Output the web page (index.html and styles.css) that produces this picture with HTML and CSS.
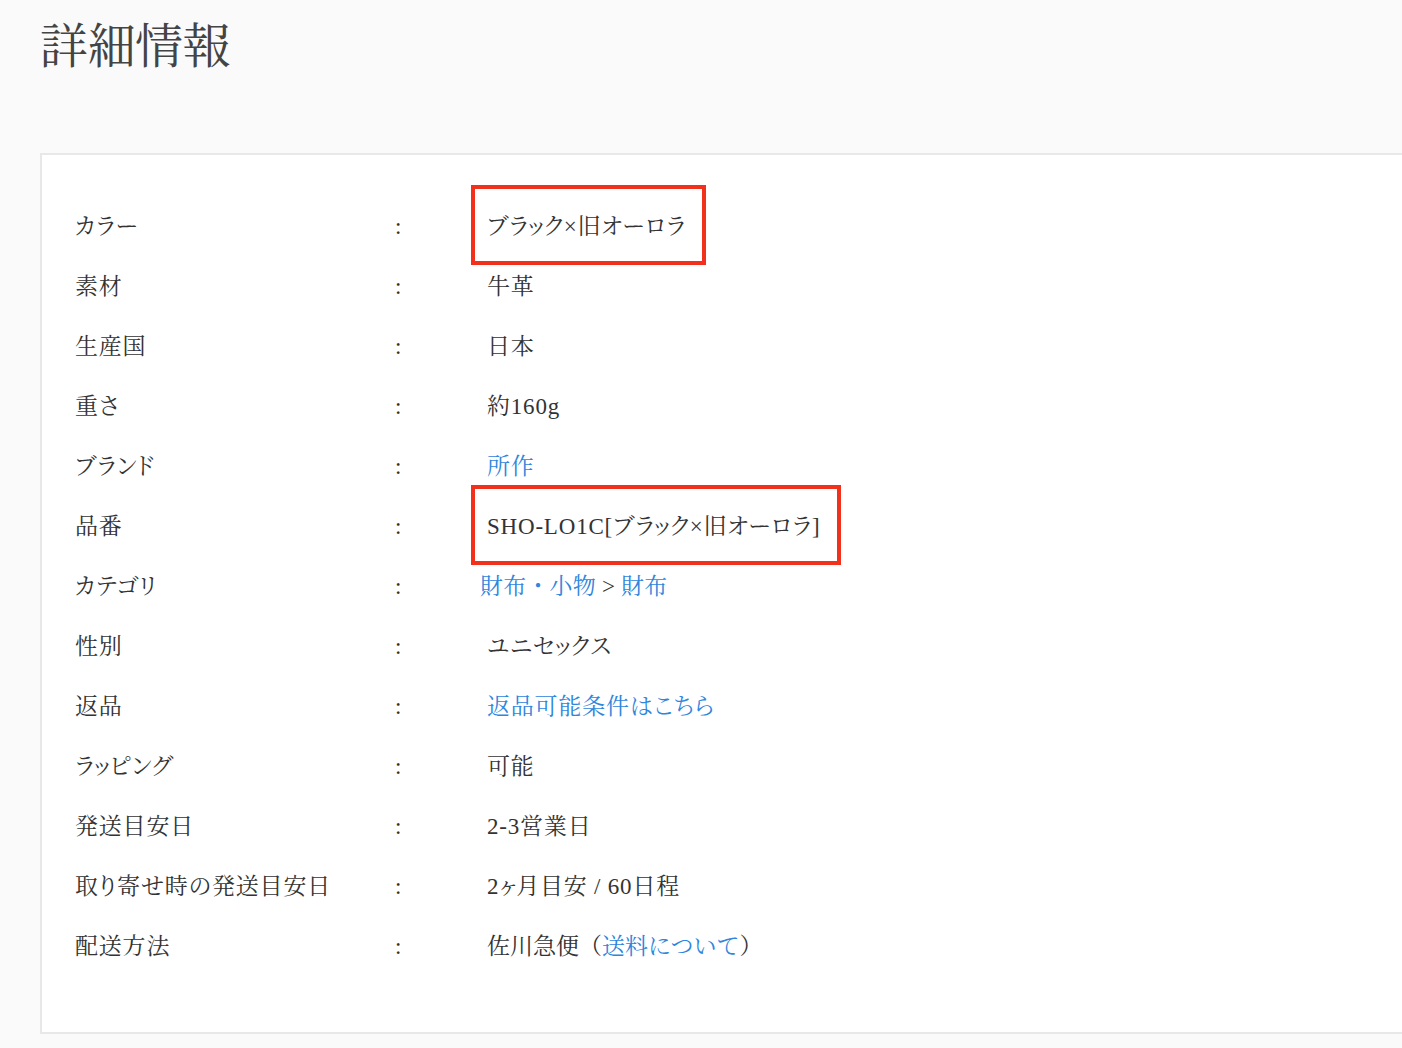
FILE: index.html
```html
<!DOCTYPE html>
<html lang="ja">
<head>
<meta charset="utf-8">
<title>詳細情報</title>
<link rel="stylesheet" href="styles.css">
</head>
<body>
<div class="page">
  <h1 class="title">詳細情報</h1>
  <div class="card">
    <div class="specs">
      <div class="label">カラー</div><div class="colon">:</div><div class="value"><span class="hl">ブラック×旧オーロラ</span></div>
      <div class="label">素材</div><div class="colon">:</div><div class="value">牛革</div>
      <div class="label">生産国</div><div class="colon">:</div><div class="value">日本</div>
      <div class="label">重さ</div><div class="colon">:</div><div class="value">約160g</div>
      <div class="label">ブランド</div><div class="colon">:</div><div class="value"><a class="link" href="#">所作</a></div>
      <div class="label">品番</div><div class="colon">:</div><div class="value"><span class="hl">SHO-LO1C[ブラック×旧オーロラ]</span></div>
      <div class="label">カテゴリ</div><div class="colon">:</div><div class="value value-cat"><a class="link" href="#">財布・小物</a> &gt; <a class="link" href="#">財布</a></div>
      <div class="label">性別</div><div class="colon">:</div><div class="value">ユニセックス</div>
      <div class="label">返品</div><div class="colon">:</div><div class="value"><a class="link" href="#">返品可能条件はこちら</a></div>
      <div class="label">ラッピング</div><div class="colon">:</div><div class="value">可能</div>
      <div class="label">発送目安日</div><div class="colon">:</div><div class="value">2-3営業日</div>
      <div class="label">取り寄せ時の発送目安日</div><div class="colon">:</div><div class="value">2ヶ月目安 / 60日程</div>
      <div class="label">配送方法</div><div class="colon">:</div><div class="value value-full">佐川急便（<a class="link" href="#">送料について</a>）</div>
    </div>
  </div>
</div>
</body>
</html>
```

FILE: styles.css
```css
html, body {
  margin: 0;
  padding: 0;
  overflow: hidden;
  background: #fafafa;
}
body {
  font-family: "Liberation Serif", "Noto Serif CJK JP", "Noto Sans CJK JP", serif;
  color: #333;
}
.page {
  padding: 13px 0 0 40px;
}
.title {
  margin: 0 0 72px 0;
  font-size: 48px;
  line-height: 68px;
  font-weight: normal;
  color: #444;
  letter-spacing: -0.5px;
}
.card {
  width: 1400px;
  background: #fff;
  border: 2px solid #e8e8e8;
  box-sizing: border-box;
  padding: 42px 0 55px 33px;
}
.specs {
  display: grid;
  grid-template-columns: 316px 80px 1fr;
  grid-auto-rows: 60px;
  font-size: 23px;
  line-height: 60px;
  font-feature-settings: "palt";
  letter-spacing: 0.8px;
}
.colon {
  padding-left: 4px;
  letter-spacing: 0;
}
.value {
  padding-left: 16px;
  white-space: nowrap;
}
.value-cat {
  padding-left: 9px;
  font-feature-settings: normal;
  letter-spacing: 0.2px;
}
.value-full {
  font-feature-settings: normal;
  letter-spacing: 0;
}
.link {
  color: #2f86dd;
  text-decoration: none;
}
.hl {
  position: relative;
  display: inline-block;
  line-height: 60px;
}
.hl::after {
  content: "";
  position: absolute;
  top: -12px;
  bottom: -8px;
  left: -16px;
  right: -20px;
  border: 4px solid #f2301b;
  box-sizing: border-box;
}
```
